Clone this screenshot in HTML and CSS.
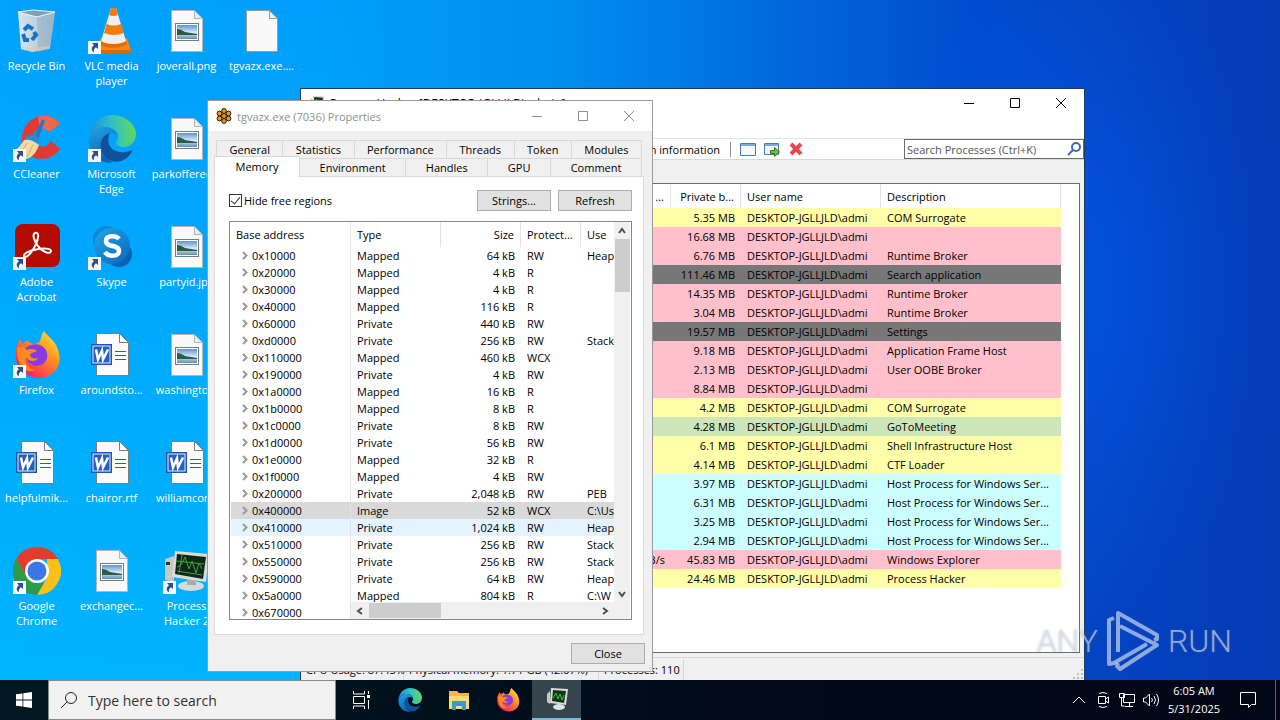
FILE: index.html
```html
<!DOCTYPE html>
<html lang="en">
<head>
  <meta charset="UTF-8" />
  <meta name="viewport" content="width=device-width, initial-scale=1.0"/>
  <title>Desktop</title>
  <link rel="stylesheet" href="styles.css">
</head>
<body>
  <!-- shared icons -->
  <svg class="sprite" aria-hidden="true">
    <defs>
      <linearGradient id="edge-top" x1="0" y1="0.5" x2="1" y2="0.4">
        <stop offset="0" stop-color="#2190d8"/><stop offset="0.5" stop-color="#2fbfc8"/><stop offset="1" stop-color="#62da56"/>
      </linearGradient>
      <linearGradient id="edge-left" x1="0" y1="0" x2="0.4" y2="1">
        <stop offset="0" stop-color="#1fa4e6"/><stop offset="1" stop-color="#0d62b4"/>
      </linearGradient>
      <linearGradient id="fox" x1="1" y1="0" x2="0.2" y2="1">
        <stop offset="0" stop-color="#fff44f"/><stop offset="0.4" stop-color="#ff9a1f"/><stop offset="0.75" stop-color="#ff4a45"/><stop offset="1" stop-color="#e31587"/>
      </linearGradient>
      <linearGradient id="bin" x1="0" y1="0" x2="1" y2="0">
        <stop offset="0" stop-color="#d9e6f0"/><stop offset="0.6" stop-color="#b9cddb"/><stop offset="1" stop-color="#8fb0c8"/>
      </linearGradient>
      <linearGradient id="skype" x1="0" y1="0" x2="1" y2="1">
        <stop offset="0" stop-color="#1fa6ea"/><stop offset="1" stop-color="#0a68bb"/>
      </linearGradient>
      <linearGradient id="photo" x1="0" y1="0" x2="0" y2="1">
        <stop offset="0" stop-color="#5f93d4"/><stop offset="0.55" stop-color="#dcecf5"/><stop offset="1" stop-color="#5c8fae"/>
      </linearGradient>
    </defs>

    <symbol id="i-shortcut" viewBox="0 0 13 13">
      <rect width="13" height="13" fill="#f4f6f8"/>
      <path d="M4 2h6v6L8 6.200C6 7.500 5.500 9 6 11.500 3 9.500 3 6.500 6 4.300z" fill="#2c4d92"/>
    </symbol>
    <symbol id="i-bin" viewBox="0 0 48 48">
      <path d="M5 5l37 0-5 36-18 4-11-3z" fill="url(#bin)"/>
      <path d="M24 10l18-5-5 36-12 4z" fill="#9db6c9" opacity=".7"/>
      <path d="M5 5l15-2 22 2-18 5z" fill="#7fa0b8" stroke="#eef5fa"/>
      <path d="M8 40l12 1 17-2v3l-18 3z" fill="#d8c8c0" opacity=".7"/>
      <g fill="none" stroke="#1673c8" stroke-width="4"><path d="M11 23l4-4 5 3"/><path d="M10 27l2 6h4"/><path d="M19 33l4-5-2-3"/></g>
    </symbol>
    <symbol id="i-vlc" viewBox="0 0 48 48">
      <path d="M13 31h26l5 15H8z" fill="#f58410"/>
      <path d="M8 43h36v3H8z" fill="#d96a05"/>
      <path d="M23 1h5l10 33c-4 5-21 5-25 0z" fill="#f0f0f0"/>
      <path d="M23 1h5l2 7q-5 2-9 0zM18.500 17q7 3 14.500 0l3 9q-10 4-20 0z" fill="#f47c0c"/>
      <path d="M13 34c5 4 20 4 25 0l1 3c-6 5-21 5-27 0z" fill="#e36b00"/>
    </symbol>
    <symbol id="i-page" viewBox="0 0 48 48">
      <path d="M8.500 3.500h23l8 8v33h-31z" fill="#f9f9f9" stroke="#9a9a9a"/>
      <path d="M31.500 3.500v8h8z" fill="#e9eef2" stroke="#9a9a9a"/>
    </symbol>
    <symbol id="i-image" viewBox="0 0 48 48">
      <path d="M8.500 3.500h23l8 8v33h-31z" fill="#f9f9f9" stroke="#b5b5b5"/>
      <path d="M31.500 3.500v8h8z" fill="#e3edf4" stroke="#b5b5b5"/>
      <rect x="12.500" y="16.500" width="23" height="17" fill="#fff" stroke="#6d7d8c"/>
      <rect x="14" y="18" width="20" height="14" fill="url(#photo)"/>
      <path d="M14 22q4 0 8 3l12 2v1H14z" fill="#2d5c46"/>
    </symbol>
    <symbol id="i-word" viewBox="0 0 48 48">
      <path d="M8.500 2.500h23l9 9v33h-32z" fill="#fcfcfc" stroke="#7d7d7d"/>
      <path d="M31.500 2.500v9h9z" fill="#fff" stroke="#7d7d7d"/>
      <path d="M27 20.500h11M27 24.500h11M27 28.500h11" stroke="#2a5cb8"/>
      <rect x="3" y="13" width="21" height="21" fill="#1e56b4"/>
      <rect x="5" y="15" width="17" height="17" fill="#2360c4" stroke="#e4ecf8"/>
      <path d="M8 18.500l2 10 4-9 1 9 5-10" fill="none" stroke="#fff" stroke-width="2.500"/>
    </symbol>
    <symbol id="i-cc" viewBox="0 0 48 48">
      <path d="M47 9C41 0 29-1 20 4 11 9 8 20 9 28c2 9 9 16 19 16 9 0 15-4 19-10l-9-8c-3 5-8 7-12 5-5-2-7-7-5-12 2-7 10-9 15-2z" fill="#df3b35"/>
      <path d="M47 9l-11 8c-3-4-6-4-9-3l-2-12c8-3 17 0 22 7z" fill="#ef6a4c"/>
      <path d="M29 4l3 2-7 19-4-2z" fill="#2279c4"/>
      <path d="M13 22q6-5 14 2l-2 6q-6-5-14-4z" fill="#2a8ad6"/>
      <path d="M11 25q8-1 15 5c-2 6-5 11-12 14L0 36c5-2 8-6 11-11z" fill="#f6d8a2"/>
      <path d="M14 28l-6 10M20 30l-6 12" stroke="#d9a95c"/>
    </symbol>
    <symbol id="i-edge" viewBox="0 0 48 48">
      <path d="M1 23C2 10 12 0 24 0c14 0 24 10 24 19 0 8-6 13-12 13-5 0-8-2-8-4s2-3 2-6c0-6-6-10-13-10C9 12 3 17 1 23z" fill="url(#edge-top)"/>
      <path d="M1 23c2-6 8-11 16-11 7 0 12 4 12 9-2-3-4-3-6-3-7 1-10 8-9 15 1 6 5 12 11 14.500C10 49 0 37 1 23z" fill="url(#edge-left)"/>
      <path d="M22 18c-8 2-11 10-8.500 17C16 43 23 48 31 46.500c6-1 11-6 13-10 .5-1-.5-1.500-1.500-1-9 4-20 1-22-8-.6-4 0-7 1.500-9.500z" fill="#11509a"/>
    </symbol>
    <symbol id="i-acrobat" viewBox="0 0 48 48">
      <rect x="2" y="1" width="45" height="43" rx="8" fill="#b30b00"/>
      <path d="M22 10c4-1 4 4 1 11-3 7-8 13-11 13-3-1 0-5 9-7 9-2 17-2 17 1 0 4-9 1-13-5-4-5-6-12-3-13z" fill="none" stroke="#fff" stroke-width="2"/>
    </symbol>
    <symbol id="i-skype" viewBox="0 0 48 48">
      <circle cx="18" cy="16" r="13" fill="#0f86d6"/><circle cx="31" cy="31" r="13" fill="#0a62b4"/>
      <circle cx="24" cy="23" r="18" fill="url(#skype)"/>
      <path d="M31 16c-3-4-13-4-13 2 0 7 13 3 13 10 0 6-11 6-14 1" fill="none" stroke="#fff" stroke-width="4.500"/>
    </symbol>
    <symbol id="i-firefox" viewBox="0 0 48 48">
      <path d="M31 0c3 5 9 8 12 14 6 12 4 22-3 28-9 8-24 6-32-3C1 31 0 17 8 8l1 5 6-4q1 3 5 4c4 0 7-2 8-6q0-4 3-7z" fill="url(#fox)"/>
      <path d="M14 16c7-5 18-3 20 6 2 10-8 16-16 11-5-3-5-7-4-9-3-3-3-6 0-8z" fill="#8a3be0"/>
      <path d="M4 17c4-2 7-1 10 2 4-2 8-1 10 1-3 2-6 1-7 4 1 4 5 4 8 3-2 4-9 4-12-1-2 6 2 11 9 13-9 4-18-3-18-22z" fill="#ff8a1c"/>
    </symbol>
    <symbol id="i-chrome" viewBox="0 0 48 48">
      <path d="M24 0a24 24 0 0 1 20.800 12H24L13.600 30 3.200 12A24 24 0 0 1 24 0z" fill="#e33b2e"/>
      <path d="M44.800 12A24 24 0 0 1 24 48l10.400-18L34 12z" fill="#fbc116"/>
      <path d="M3.200 12l10.400 18L24 36h7l-7 12A24 24 0 0 1 3.200 12z" fill="#2b9c48"/>
      <circle cx="24" cy="24" r="12" fill="#fff"/><circle cx="24" cy="24" r="9.500" fill="#3b78e7"/>
    </symbol>
    <symbol id="i-hacker" viewBox="0 0 48 48">
      <path d="M2 12l9-3v26l-9-2z" fill="#c9c9c4"/><path d="M3 15h4v3H3z" fill="#333"/>
      <ellipse cx="28" cy="39" rx="13" ry="5" fill="#d7d9da"/><path d="M24 30h9v8h-9z" fill="#aaa"/>
      <path d="M12 4l34 3-3 28-34-5z" fill="#dcdcd6"/>
      <path d="M14 7l29 3-3 22-28-5z" fill="#12251a"/>
      <path d="M14 20l4-2 4-8 4 12 3-8 4 12 3-10 3 6M14 24l25 4M19 8l-3 18M13 14l28 3" fill="none" stroke="#37a43c"/>
    </symbol>
    <symbol id="i-hacker-small" viewBox="0 0 24 24">
      <path d="M2 7l3-3v13l-3-2z" fill="#c9c9c4"/>
      <ellipse cx="14" cy="20" rx="6" ry="3" fill="#e0e2e3"/>
      <path d="M6 1l17 1-2 16-16-2z" fill="#dcdcd6"/>
      <path d="M8 3l13 1-2 12-12-2z" fill="#12351a"/>
      <path d="M8 11l3-5 2 6 2-5 2 6 2-5" fill="none" stroke="#37c43c"/>
    </symbol>
    <symbol id="i-gear" viewBox="0 0 16 16">
      <g fill="#e79a1d" stroke="#2b1a05"><circle cx="8" cy="3" r="2.400"/><circle cx="12.500" cy="5.500" r="2.400"/><circle cx="12.500" cy="10.500" r="2.400"/><circle cx="8" cy="13" r="2.400"/><circle cx="3.500" cy="10.500" r="2.400"/><circle cx="3.500" cy="5.500" r="2.400"/><circle cx="8" cy="8" r="2.400"/></g>
    </symbol>
    <symbol id="i-min" viewBox="0 0 12 12"><path d="M1 6.500h10" stroke="currentColor"/></symbol>
    <symbol id="i-max" viewBox="0 0 12 12"><path d="M1.500 1.500h9v9h-9z" fill="none" stroke="currentColor"/></symbol>
    <symbol id="i-close" viewBox="0 0 12 12"><path d="M1 1l10 10M11 1L1 11" stroke="currentColor"/></symbol>
    <symbol id="i-glass" viewBox="0 0 16 16"><circle cx="9" cy="6" r="4" fill="none" stroke="currentColor" stroke-width="2"/><path d="M6 9L1 14" stroke="currentColor" stroke-width="2"/></symbol>
    <symbol id="i-arrow" viewBox="0 0 10 10"><path d="M2 7l3-4 3 4" fill="none" stroke="currentColor" stroke-width="2"/></symbol>
  </svg>

  <main class="desktop">
    <nav class="icons" aria-label="Desktop icons">
      <a href="#" class="icon"><span class="pic"><svg><use href="#i-bin"/></svg></span>Recycle Bin</a>
      <a href="#" class="icon"><span class="pic"><svg><use href="#i-cc"/></svg><svg class="badge"><use href="#i-shortcut"/></svg></span>CCleaner</a>
      <a href="#" class="icon"><span class="pic"><svg><use href="#i-acrobat"/></svg><svg class="badge"><use href="#i-shortcut"/></svg></span>Adobe<br>Acrobat</a>
      <a href="#" class="icon"><span class="pic"><svg><use href="#i-firefox"/></svg><svg class="badge"><use href="#i-shortcut"/></svg></span>Firefox</a>
      <a href="#" class="icon"><span class="pic"><svg><use href="#i-word"/></svg></span>helpfulmik...</a>
      <a href="#" class="icon"><span class="pic"><svg><use href="#i-chrome"/></svg><svg class="badge"><use href="#i-shortcut"/></svg></span>Google<br>Chrome</a>
      <a href="#" class="icon"><span class="pic"><svg><use href="#i-vlc"/></svg><svg class="badge"><use href="#i-shortcut"/></svg></span>VLC media<br>player</a>
      <a href="#" class="icon"><span class="pic"><svg><use href="#i-edge"/></svg><svg class="badge"><use href="#i-shortcut"/></svg></span>Microsoft<br>Edge</a>
      <a href="#" class="icon"><span class="pic"><svg><use href="#i-skype"/></svg><svg class="badge"><use href="#i-shortcut"/></svg></span>Skype</a>
      <a href="#" class="icon"><span class="pic"><svg><use href="#i-word"/></svg></span>aroundsto...</a>
      <a href="#" class="icon"><span class="pic"><svg><use href="#i-word"/></svg></span>chairor.rtf</a>
      <a href="#" class="icon"><span class="pic"><svg><use href="#i-image"/></svg></span>exchangec...</a>
      <a href="#" class="icon"><span class="pic"><svg><use href="#i-image"/></svg></span>joverall.png</a>
      <a href="#" class="icon"><span class="pic"><svg><use href="#i-image"/></svg></span>parkoffered...</a>
      <a href="#" class="icon"><span class="pic"><svg><use href="#i-image"/></svg></span>partyid.jpg</a>
      <a href="#" class="icon"><span class="pic"><svg><use href="#i-image"/></svg></span>washingto...</a>
      <a href="#" class="icon"><span class="pic"><svg><use href="#i-word"/></svg></span>williamcor...</a>
      <a href="#" class="icon"><span class="pic"><svg><use href="#i-hacker"/></svg><svg class="badge"><use href="#i-shortcut"/></svg></span>Process<br>Hacker 2</a>
      <a href="#" class="icon"><span class="pic"><svg><use href="#i-page"/></svg></span>tgvazx.exe....</a>
    </nav>

    <section class="window hacker" aria-label="Process Hacker">
      <header class="titlebar">
        <svg class="app-icon"><use href="#i-hacker-small"/></svg>
        <span class="title">Process Hacker [DESKTOP-JGLLJLD\admin]</span>
        <button class="ctl" aria-label="Minimize"><svg><use href="#i-min"/></svg></button>
        <button class="ctl" aria-label="Maximize"><svg><use href="#i-max"/></svg></button>
        <button class="ctl" aria-label="Close window"><svg><use href="#i-close"/></svg></button>
      </header>
      <div class="menubar"></div>
      <div class="toolbar">
        <button class="tool-text">System information</button>
        <button class="tool" aria-label="Window"><svg viewBox="0 0 16 16"><path d="M.5 2.500h15v12H.5z" fill="#f4f9ff" stroke="#4a78b8"/><path d="M1 3h14v2H1z" fill="#7fabe0"/></svg></button>
        <button class="tool" aria-label="Find window"><svg viewBox="0 0 16 16"><path d="M.5 2.500h14v11H.5z" fill="#f4f9ff" stroke="#4a78b8"/><path d="M1 3h13v2H1z" fill="#7fabe0"/><path d="M6.500 9.500h4v-3l5 4.500-5 4.500v-3h-4z" fill="#6fbf3a" stroke="#35751c"/></svg></button>
        <button class="tool" aria-label="Terminate"><svg viewBox="0 0 16 16"><path d="M3 3l10 10M13 3L3 13" stroke="#e8474f" stroke-width="4"/></svg></button>
        <label class="search"><input type="text" placeholder="Search Processes (Ctrl+K)" aria-label="Search Processes"><svg><use href="#i-glass"/></svg></label>
      </div>
      <div class="list-wrap">
        <table class="processes">
          <colgroup><col><col class="c-io"><col class="c-private"><col class="c-user"><col class="c-desc"><col class="c-rest"></colgroup>
          <thead>
            <tr><th></th><th class="num">...</th><th class="num">Private b...</th><th>User name</th><th>Description</th><td></td></tr>
          </thead>
          <tbody>
            <tr class="own"><td></td><td></td><td>5.35 MB</td><td>DESKTOP-JGLLJLD\admi</td><td>COM Surrogate</td></tr>
            <tr class="immersive"><td></td><td></td><td>16.68 MB</td><td>DESKTOP-JGLLJLD\admi</td><td></td></tr>
            <tr class="immersive"><td></td><td></td><td>6.76 MB</td><td>DESKTOP-JGLLJLD\admi</td><td>Runtime Broker</td></tr>
            <tr class="suspended"><td></td><td></td><td>111.46 MB</td><td>DESKTOP-JGLLJLD\admi</td><td>Search application</td></tr>
            <tr class="immersive"><td></td><td></td><td>14.35 MB</td><td>DESKTOP-JGLLJLD\admi</td><td>Runtime Broker</td></tr>
            <tr class="immersive"><td></td><td></td><td>3.04 MB</td><td>DESKTOP-JGLLJLD\admi</td><td>Runtime Broker</td></tr>
            <tr class="suspended"><td></td><td></td><td>19.57 MB</td><td>DESKTOP-JGLLJLD\admi</td><td>Settings</td></tr>
            <tr class="immersive"><td></td><td></td><td>9.18 MB</td><td>DESKTOP-JGLLJLD\admi</td><td>Application Frame Host</td></tr>
            <tr class="immersive"><td></td><td></td><td>2.13 MB</td><td>DESKTOP-JGLLJLD\admi</td><td>User OOBE Broker</td></tr>
            <tr class="immersive"><td></td><td></td><td>8.84 MB</td><td>DESKTOP-JGLLJLD\admi</td><td></td></tr>
            <tr class="own"><td></td><td></td><td>4.2 MB</td><td>DESKTOP-JGLLJLD\admi</td><td>COM Surrogate</td></tr>
            <tr class="dotnet"><td></td><td></td><td>4.28 MB</td><td>DESKTOP-JGLLJLD\admi</td><td>GoToMeeting</td></tr>
            <tr class="own"><td></td><td></td><td>6.1 MB</td><td>DESKTOP-JGLLJLD\admi</td><td>Shell Infrastructure Host</td></tr>
            <tr class="own"><td></td><td></td><td>4.14 MB</td><td>DESKTOP-JGLLJLD\admi</td><td>CTF Loader</td></tr>
            <tr class="service"><td></td><td></td><td>3.97 MB</td><td>DESKTOP-JGLLJLD\admi</td><td>Host Process for Windows Ser...</td></tr>
            <tr class="service"><td></td><td></td><td>6.31 MB</td><td>DESKTOP-JGLLJLD\admi</td><td>Host Process for Windows Ser...</td></tr>
            <tr class="service"><td></td><td></td><td>3.25 MB</td><td>DESKTOP-JGLLJLD\admi</td><td>Host Process for Windows Ser...</td></tr>
            <tr class="service"><td></td><td></td><td>2.94 MB</td><td>DESKTOP-JGLLJLD\admi</td><td>Host Process for Windows Ser...</td></tr>
            <tr class="immersive"><td></td><td>B/s</td><td>45.83 MB</td><td>DESKTOP-JGLLJLD\admi</td><td>Windows Explorer</td></tr>
            <tr class="own"><td></td><td></td><td>24.46 MB</td><td>DESKTOP-JGLLJLD\admi</td><td>Process Hacker</td></tr>
          </tbody>
        </table>
      </div>
      <footer class="statusbar">
        <span class="s-cpu">CPU Usage: 87.45%</span><span class="s-mem">Physical memory: 1.71 GB (42.67%)</span><span class="s-proc">Processes: 110</span>
        <svg class="grip" viewBox="0 0 10 10"><path d="M8 0h2v2H8zM8 4h2v2H8zM4 4h2v2H4zM8 8h2v2H8zM4 8h2v2H4zM0 8h2v2H0z" fill="#bdbdbd"/></svg>
      </footer>
    </section>

    <section class="window props" aria-label="tgvazx.exe Properties">
      <header class="titlebar">
        <svg class="app-icon"><use href="#i-gear"/></svg>
        <span class="title">tgvazx.exe (7036) Properties</span>
        <button class="ctl" aria-label="Minimize"><svg><use href="#i-min"/></svg></button>
        <button class="ctl" aria-label="Maximize"><svg><use href="#i-max"/></svg></button>
        <button class="ctl" aria-label="Close window"><svg><use href="#i-close"/></svg></button>
      </header>
      <div class="tabs">
        <button>General</button><button>Statistics</button><button>Performance</button><button>Threads</button><button>Token</button><button>Modules</button>
      </div>
      <div class="tabs front">
        <button class="active">Memory</button><button>Environment</button><button>Handles</button><button>GPU</button><button>Comment</button>
      </div>
      <div class="panel">
        <div class="options">
          <input type="checkbox" id="hide-free" checked>
          <label for="hide-free">Hide free regions</label>
          <button class="btn">Strings...</button>
          <button class="btn">Refresh</button>
        </div>
        <div class="tree">
          <table class="regions">
            <colgroup><col class="r-base"><col class="r-type"><col class="r-size"><col class="r-prot"><col></colgroup>
            <thead>
              <tr><th>Base address</th><th>Type</th><th class="num">Size</th><th>Protect...</th><th>Use</th></tr>
            </thead>
            <tbody>
              <tr><td>0x10000</td><td>Mapped</td><td>64 kB</td><td>RW</td><td>Heap</td></tr>
              <tr><td>0x20000</td><td>Mapped</td><td>4 kB</td><td>R</td><td></td></tr>
              <tr><td>0x30000</td><td>Mapped</td><td>4 kB</td><td>R</td><td></td></tr>
              <tr><td>0x40000</td><td>Mapped</td><td>116 kB</td><td>R</td><td></td></tr>
              <tr><td>0x60000</td><td>Private</td><td>440 kB</td><td>RW</td><td></td></tr>
              <tr><td>0xd0000</td><td>Private</td><td>256 kB</td><td>RW</td><td>Stack</td></tr>
              <tr><td>0x110000</td><td>Mapped</td><td>460 kB</td><td>WCX</td><td></td></tr>
              <tr><td>0x190000</td><td>Private</td><td>4 kB</td><td>RW</td><td></td></tr>
              <tr><td>0x1a0000</td><td>Mapped</td><td>16 kB</td><td>R</td><td></td></tr>
              <tr><td>0x1b0000</td><td>Mapped</td><td>8 kB</td><td>R</td><td></td></tr>
              <tr><td>0x1c0000</td><td>Private</td><td>8 kB</td><td>RW</td><td></td></tr>
              <tr><td>0x1d0000</td><td>Private</td><td>56 kB</td><td>RW</td><td></td></tr>
              <tr><td>0x1e0000</td><td>Mapped</td><td>32 kB</td><td>R</td><td></td></tr>
              <tr><td>0x1f0000</td><td>Mapped</td><td>4 kB</td><td>RW</td><td></td></tr>
              <tr><td>0x200000</td><td>Private</td><td>2,048 kB</td><td>RW</td><td>PEB</td></tr>
              <tr class="selected"><td>0x400000</td><td>Image</td><td>52 kB</td><td>WCX</td><td>C:\Us</td></tr>
              <tr class="hover"><td>0x410000</td><td>Private</td><td>1,024 kB</td><td>RW</td><td>Heap</td></tr>
              <tr><td>0x510000</td><td>Private</td><td>256 kB</td><td>RW</td><td>Stack</td></tr>
              <tr><td>0x550000</td><td>Private</td><td>256 kB</td><td>RW</td><td>Stack</td></tr>
              <tr><td>0x590000</td><td>Private</td><td>64 kB</td><td>RW</td><td>Heap</td></tr>
              <tr><td>0x5a0000</td><td>Mapped</td><td>804 kB</td><td>R</td><td>C:\W</td></tr>
              <tr><td>0x670000</td><td></td><td></td><td></td><td></td></tr>
            </tbody>
          </table>
          <div class="vscroll"><svg><use href="#i-arrow"/></svg><i class="thumb"></i><svg class="down"><use href="#i-arrow"/></svg></div>
          <div class="hscroll"><svg class="left"><use href="#i-arrow"/></svg><i class="thumb"></i><svg class="right"><use href="#i-arrow"/></svg></div>
        </div>
      </div>
      <div class="actions"><button class="btn">Close</button></div>
    </section>

    <div class="watermark" aria-hidden="true">
      <span>ANY</span>
      <svg viewBox="0 0 56 62"><g fill="none" stroke="currentColor" stroke-width="4" stroke-linejoin="round"><path d="M9 8L4 10v44l5-1 33-19"/><path d="M13 42V3l39 22v4l-3 1"/><path d="M15 16l37 19-37 24-3-3 1-3"/></g></svg>
      <span>RUN</span>
    </div>
  </main>

  <footer class="taskbar">
    <button class="start" aria-label="Start"><svg viewBox="0 0 16 16"><path d="M0 2.300L6.500 1.400v6.200H0zM7.300 1.300L16 0v7.600H7.300zM0 8.400h6.500v6.200L0 13.700zM7.300 8.400H16V16l-8.700-1.300z" fill="#fff"/></svg></button>
    <label class="find">
      <svg viewBox="0 0 18 18"><circle cx="11" cy="7" r="5.500" fill="none" stroke="#222"/><path d="M7 11l-6 6" stroke="#222"/></svg>
      <input type="text" placeholder="Type here to search" aria-label="Type here to search">
    </label>
    <button class="task" aria-label="Task View"><svg class="small" viewBox="0 0 18 18"><path d="M1.500 5.500h11v7h-11zM1.500 0v3h11V0M1.500 18v-3h11v3M16.500 0v3M16.500 9v9" fill="none" stroke="#fff"/><path d="M15 4h3v3h-3z" fill="#fff"/></svg></button>
    <button class="task" aria-label="Microsoft Edge"><svg><use href="#i-edge"/></svg></button>
    <button class="task" aria-label="File Explorer"><svg viewBox="0 0 24 24"><path d="M2 3h8l2 2h10v16H2z" fill="#f3b73b"/><path d="M2 8h20v13H2z" fill="#ffd975"/><path d="M5 13h14v9h-4v-4H9v4H5z" fill="#3f93d8"/></svg></button>
    <button class="task" aria-label="Firefox"><svg><use href="#i-firefox"/></svg></button>
    <button class="task open" aria-label="Process Hacker"><svg><use href="#i-hacker-small"/></svg></button>
    <div class="tray">
      <button aria-label="Show hidden icons"><svg viewBox="0 0 18 18"><path d="M3 12l6-6 6 6" fill="none" stroke="#fff"/></svg></button>
      <button aria-label="Meet Now"><svg viewBox="0 0 18 18"><path d="M4.500 5.500h7v7h-7zM11.500 8l3-2v6l-3-2M5 2.500q4-2 8 0M5 15.500q4 2 8 0" fill="none" stroke="#fff"/></svg></button>
      <button aria-label="Network"><svg viewBox="0 0 18 18"><path d="M5.500 3.500h11v8h-11zM11.500 12v3M7 15.500h8M1.500 2.500h5v4h-5zM3.500 7v8h3" fill="none" stroke="#fff"/></svg></button>
      <button aria-label="Volume"><svg viewBox="0 0 18 18"><path d="M1.500 7h2l4-4v12l-4-4h-2zM9.500 7q2 2 0 4M12 5q3 4 0 8M14.500 3q4 6 0 12" fill="none" stroke="#fff"/></svg></button>
      <button class="clock">6:05 AM<br>5/31/2025</button>
      <button class="notes" aria-label="Notifications"><svg viewBox="0 0 18 18"><path d="M1.500 1.500h15v12h-4l-3 3v-3h-8z" fill="none" stroke="#fff"/></svg></button>
      <button class="peek" aria-label="Show desktop"></button>
    </div>
  </footer>
</body>
</html>
```
FILE: styles.css
```css
* {
  box-sizing: border-box;
}

body {
  font-family: 'Open Sans', sans-serif;
  font-size: 11px;
  margin: 0;
  height: 100vh;
  display: flex;
  flex-direction: column;
  overflow: hidden;
}

button, input {
  font: inherit;
  color: inherit;
  background: none;
  border: 0;
  padding: 0;
  margin: 0;
}

.sprite {
  position: absolute;
  width: 0;
  height: 0;
}

.desktop {
  position: relative;
  flex: 1;
  min-height: 0;
  overflow: hidden;
  background:
    radial-gradient(ellipse 16% 50% at 84% 42%, rgba(0, 100, 255, 0.45), rgba(0, 100, 255, 0)),
    linear-gradient(to bottom, rgba(0, 184, 255, 0), rgba(0, 184, 255, 0.8)) left / 30% 100% no-repeat,
    linear-gradient(to right, #00a2fc 0%, #009efa 25%, #008eee 44%, #0066dc 62%, #004cce 76%, #0444c2 86%, #043ab4 100%);
}

/* desktop icons */
.icons {
  display: grid;
  grid-template-rows: repeat(6, 108px);
  grid-auto-flow: column;
  grid-auto-columns: 75px;
  width: max-content;
}

.icon {
  display: flex;
  flex-direction: column;
  align-items: center;
  padding: 7px 2px 0 0;
  color: #fff;
  line-height: 15px;
  text-align: center;
  text-decoration: none;
  white-space: nowrap;
}

.pic {
  position: relative;
  width: 48px;
  height: 48px;
  margin-bottom: 3px;
}

.pic svg {
  width: 48px;
  height: 48px;
}

.pic .badge {
  position: absolute;
  left: 0;
  bottom: 1px;
  width: 13px;
  height: 13px;
}

/* windows */
.window {
  position: absolute;
  display: flex;
  flex-direction: column;
}

.titlebar {
  display: flex;
  align-items: center;
  flex: none;
  height: 30px;
  padding-left: 8px;
  background: #fff;
}

.app-icon {
  width: 16px;
  height: 16px;
  margin-right: 5px;
}

.title {
  flex: 1;
}

.ctl {
  width: 46px;
  height: 28px;
}

.ctl svg {
  width: 12px;
  height: 12px;
  display: block;
  margin: 0 auto;
}

.hacker {
  left: 300px;
  top: 88px;
  bottom: 0;
  width: 785px;
  background: #f0f0f0;
  border: 1px solid #1d3c5e;
  border-bottom: 0;
}

.hacker .titlebar {
  height: 28px;
  font-size: 12px;
}

.menubar {
  height: 21px;
  background: #fff;
}

.toolbar {
  display: flex;
  align-items: center;
  justify-content: flex-end;
  height: 22px;
  background: #fff;
  border-top: 1px solid #e3e3e3;
  border-bottom: 1px solid #dadada;
}

.tool-text {
  padding-right: 10px;
  margin-right: 5px;
  border-right: 1px solid #8c8c8c;
}

.tool {
  width: 24px;
  height: 20px;
}

.tool svg {
  display: block;
  width: 16px;
  height: 16px;
  margin: 0 auto;
}

.search {
  display: flex;
  align-items: center;
  width: 180px;
  height: 20px;
  margin-left: 96px;
  padding-left: 2px;
  border: 1px solid #6b6b6b;
  background: #fff;
}

.search input {
  flex: 1;
  min-width: 0;
}

.search input::placeholder {
  color: #555;
  opacity: 1;
}

.search svg {
  width: 16px;
  height: 16px;
  color: #3b6cb4;
}

.list-wrap {
  flex: 1;
  min-height: 0;
  margin: 23px 4px 4px 3px;
  border: 1px solid #6b6b70;
  background: #fff;
  overflow: hidden;
}

table {
  width: 100%;
  table-layout: fixed;
  border-spacing: 0;
}

th, td {
  padding: 0 6px;
  font-weight: normal;
  text-align: left;
  white-space: nowrap;
  overflow: hidden;
}

th {
  border-right: 1px solid #e3e3e3;
}

.num {
  text-align: right;
}

.processes th {
  height: 24px;
}

.processes tbody td {
  height: 19px;
}

.processes tbody td:nth-child(2),
.processes tbody td:nth-child(3) {
  text-align: right;
}

.c-io { width: 60px; }
.c-private { width: 70px; }
.c-user { width: 140px; }
.c-desc { width: 180px; }
.c-rest { width: 18px; }

.own td { background: #ffffaa; }
.immersive td { background: #ffc0cb; }
.suspended td { background: #777; }
.dotnet td { background: #cde6b9; }
.service td { background: #ccffff; }

.statusbar {
  display: flex;
  align-items: center;
  height: 23px;
  border-top: 1px solid #d7d7d7;
}

.statusbar span {
  line-height: 21px;
  padding-left: 5px;
  border-right: 1px solid #d7d7d7;
  white-space: nowrap;
}

.s-cpu { width: 103px; }
.s-mem { width: 195px; }
.s-proc { width: 85px; }

.grip {
  width: 10px;
  height: 10px;
  margin: auto 1px 1px auto;
}

/* properties dialog */
.props {
  left: 207px;
  top: 100px;
  bottom: 8px;
  width: 446px;
  background: #f0f0f0;
  border: 1px solid #9a9a9a;
}

.props .titlebar {
  color: #8f8f8f;
  margin-bottom: 9px;
}

.tabs {
  display: flex;
  height: 18px;
  margin: 0 10px 0 8px;
}

.tabs button {
  flex: auto;
  border: 1px solid #d9d9d9;
  border-width: 1px 1px 0 0;
  background: #f0f0f0;
}

.tabs button:first-child {
  border-left-width: 1px;
}

.front .active {
  position: relative;
  flex: none;
  width: 86px;
  margin: -2px 0 -1px -2px;
  padding-bottom: 2px;
  background: #fff;
  z-index: 1;
}

.panel {
  flex: 1;
  min-height: 0;
  display: flex;
  flex-direction: column;
  margin: 0 8px 0 6px;
  padding: 13px 11px 14px 14px;
  background: #fff;
  border: 1px solid #dcdcdc;
}

.options {
  display: flex;
  align-items: center;
  gap: 7px;
  margin-bottom: 10px;
}

.options input {
  appearance: none;
  width: 13px;
  height: 13px;
  border: 1px solid #333;
  background: #fff;
}

.options input:checked::after {
  content: "";
  display: block;
  width: 4px;
  height: 8px;
  margin: 0 auto;
  border: solid #333;
  border-width: 0 1px 1px 0;
  transform: rotate(40deg);
}

.options label {
  flex: 1;
  margin-left: -5px;
}

.btn {
  width: 74px;
  height: 21px;
  background: #e1e1e1;
  border: 1px solid #adadad;
}

.tree {
  position: relative;
  flex: 1;
  min-height: 0;
  display: flex;
  align-items: flex-start;
  padding: 0 1px;
  border: 1px solid #828790;
  overflow: hidden;
}

.regions {
  flex: 1;
  min-width: 0;
}

.regions th {
  height: 25px;
}

.regions td {
  height: 17px;
}

.regions th:first-child {
  padding-left: 5px;
}

.regions td:first-child {
  padding-left: 21px;
  border-right: 1px solid #e3e3e3;
  background: url("data:image/svg+xml,%3Csvg xmlns='http://www.w3.org/2000/svg' width='6' height='9'%3E%3Cpath d='M1 1l3.500 3.500L1 8' fill='none' stroke='%23999' stroke-width='2'/%3E%3C/svg%3E") 11px 4px no-repeat;
}

.regions td:nth-child(3) {
  text-align: right;
}

.regions th:last-child,
.regions td:last-child {
  padding-right: 0;
  border-right: 0;
}

.r-base { width: 120px; }
.r-type { width: 90px; }
.r-size { width: 80px; }
.r-prot { width: 60px; }

.selected { background: #d9d9d9; }
.hover { background: #e5f3ff; }

.vscroll, .hscroll {
  display: flex;
  background: #f0f0f0;
}

.vscroll {
  flex-direction: column;
  align-items: center;
  align-self: stretch;
  width: 16px;
  padding: 4px 0 20px;
}

.vscroll .thumb {
  width: 15px;
  height: 53px;
  margin: 3px 0 auto;
}

.hscroll {
  position: absolute;
  left: 121px;
  right: 17px;
  bottom: 0;
  height: 17px;
  align-items: center;
  padding: 0 4px;
}

.hscroll .thumb {
  width: 72px;
  height: 15px;
  margin: 0 auto 0 4px;
}

.thumb {
  background: #cdcdcd;
}

.vscroll svg, .hscroll svg {
  width: 10px;
  height: 10px;
  flex: none;
  color: #505050;
}

.down { transform: rotate(180deg); }
.left { transform: rotate(-90deg); }
.right { transform: rotate(90deg); }

.actions {
  display: flex;
  justify-content: flex-end;
  padding: 8px 7px 7px;
}

/* corner logo */
.watermark {
  position: absolute;
  right: 48px;
  bottom: 6px;
  display: flex;
  align-items: center;
  gap: 7px;
  font-family: Roboto, sans-serif;
  font-size: 32px;
  font-weight: 300;
  line-height: 66px;
  color: rgba(215, 225, 240, 0.65);
  text-shadow: 0 0 3px rgba(110, 110, 120, 0.4);
}

.watermark svg {
  width: 56px;
  height: 62px;
}

/* taskbar */
.taskbar {
  display: flex;
  height: 40px;
  background: linear-gradient(to right, #001820, #010a18 60%, #020615);
  color: #fff;
}

.start {
  width: 48px;
}

.start svg {
  width: 16px;
  height: 16px;
  display: block;
  margin: 0 auto;
}

.find {
  display: flex;
  align-items: center;
  gap: 10px;
  width: 288px;
  padding-left: 11px;
  border: 1px solid #8b8b8b;
  background: #f2f2f2;
  font-size: 14px;
}

.find svg {
  width: 18px;
  height: 18px;
}

.find input {
  flex: 1;
}

.find input::placeholder {
  color: #333;
  opacity: 1;
}

.task {
  width: 49px;
}

.task svg {
  width: 24px;
  height: 24px;
  display: block;
  margin: 0 auto;
}

.task .small {
  width: 18px;
  height: 18px;
}

.open {
  background: #34454e;
  border-bottom: 2px solid #76b9ed;
}

.tray {
  display: flex;
  align-items: stretch;
  margin-left: auto;
}

.tray button {
  width: 24px;
}

.tray svg {
  display: block;
  width: 18px;
  height: 18px;
  margin: 0 auto;
}

.tray .clock {
  width: 62px;
  line-height: 18px;
}

.tray .notes {
  width: 46px;
}

.tray .peek {
  width: 5px;
  margin-left: 4px;
  border-left: 1px solid #5a626c;
}
```
